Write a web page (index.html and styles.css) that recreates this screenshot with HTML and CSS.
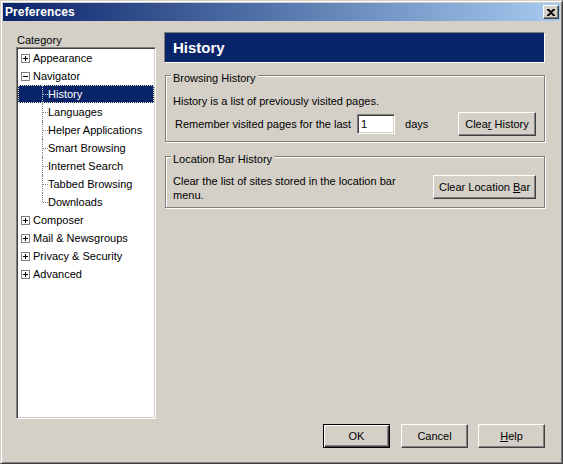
FILE: index.html
```html
<!DOCTYPE html>
<html>
<head>
<meta charset="utf-8">
<title>Preferences</title>
<link rel="stylesheet" href="styles.css">
</head>
<body>
<div class="window">
  <div class="titlebar">
    <span class="title">Preferences</span>
    <div class="close">
      <svg width="8" height="7" viewBox="0 0 8 7"><path d="M0 0h2l2 2 2-2h2v1L5 3.5 8 6v1H6L4 5 2 7H0V6l3-2.5L0 1z" fill="#000"/></svg>
    </div>
  </div>
  <div class="main">
    <div class="left">
      <div class="cat-label">Category</div>
      <div class="tree">
        <div class="row top"><span class="exp plus"></span><span class="lbl">Appearance</span></div>
        <div class="row top"><span class="exp minus"></span><span class="lbl">Navigator</span></div>
        <div class="row child selected"><span class="lbl">History</span></div>
        <div class="row child"><span class="lbl">Languages</span></div>
        <div class="row child"><span class="lbl">Helper Applications</span></div>
        <div class="row child"><span class="lbl">Smart Browsing</span></div>
        <div class="row child"><span class="lbl">Internet Search</span></div>
        <div class="row child"><span class="lbl">Tabbed Browsing</span></div>
        <div class="row child last"><span class="lbl">Downloads</span></div>
        <div class="row top"><span class="exp plus"></span><span class="lbl">Composer</span></div>
        <div class="row top"><span class="exp plus"></span><span class="lbl">Mail &amp; Newsgroups</span></div>
        <div class="row top"><span class="exp plus"></span><span class="lbl">Privacy &amp; Security</span></div>
        <div class="row top"><span class="exp plus"></span><span class="lbl">Advanced</span></div>
      </div>
    </div>
    <div class="right">
      <div class="header">History</div>
      <fieldset class="group g1">
        <legend>Browsing History</legend>
        <div class="desc">History is a list of previously visited pages.</div>
        <div class="hrow">
          <span class="remember">Remember visited pa<u>g</u>es for the last</span>
          <span class="input">1</span>
          <span class="days">days</span>
          <span class="btn clear-hist"><span>Clea<u>r</u> History</span></span>
        </div>
      </fieldset>
      <fieldset class="group g2">
        <legend>Location Bar History</legend>
        <div class="lrow">
          <div class="desc2">Clear the list of sites stored in the location bar menu.</div>
          <span class="btn clear-loc"><span>Clear Location <u>B</u>ar</span></span>
        </div>
      </fieldset>
    </div>
  </div>
  <div class="footer">
    <span class="btn foot default"><span>OK</span></span>
    <span class="btn foot cancel"><span>Cancel</span></span>
    <span class="btn foot"><span><u>H</u>elp</span></span>
  </div>
</div>
</body>
</html>
```
FILE: styles.css
```css
html, body {
  margin: 0;
  padding: 0;
  background: #d4d0c8;
}
body {
  font-family: "Liberation Sans", Arial, sans-serif;
  font-size: 11px;
  color: #000;
}
.window {
  width: 563px;
  height: 464px;
  box-sizing: border-box;
  background: #d4d0c8;
  border: 1px solid;
  border-color: #d4d0c8 #404040 #404040 #d4d0c8;
  box-shadow: inset 1px 1px 0 #fff, inset -1px -1px 0 #808080;
  padding: 2px;
}
.titlebar {
  height: 18px;
  background: linear-gradient(to right, #0a246a, #a6caf0);
  display: flex;
  align-items: center;
  justify-content: space-between;
  padding-left: 2px;
}
.title {
  color: #fff;
  font-weight: bold;
  font-size: 12px;
  letter-spacing: 0.1px;
}
.close {
  width: 16px;
  height: 14px;
  box-sizing: border-box;
  margin-right: 1px;
  background: #d4d0c8;
  border: 1px solid;
  border-color: #fff #404040 #404040 #fff;
  box-shadow: inset -1px -1px 0 #808080;
  display: flex;
  align-items: center;
  justify-content: center;
}
.close svg { display: block; margin-left: -1px; }
.main {
  display: flex;
  padding: 11px 0 0 13px;
  height: 398px;
  box-sizing: border-box;
}
.left {
  width: 140px;
  margin-top: 1px;
}
.cat-label {
  height: 14px;
  line-height: 14px;
  padding-left: 1px;
}
.tree {
  width: 140px;
  height: 372px;
  box-sizing: border-box;
  background: #fff;
  border: 1px solid;
  border-color: #808080 #fff #fff #808080;
  box-shadow: inset 1px 1px 0 #404040, inset -1px -1px 0 #d4d0c8;
  padding: 1px;
}
.row {
  height: 18px;
  line-height: 18px;
  display: flex;
  align-items: center;
  position: relative;
  white-space: nowrap;
}
.row.top { padding-left: 3px; }
.exp {
  width: 9px;
  height: 9px;
  box-sizing: border-box;
  border: 1px solid #808080;
  position: relative;
  margin-right: 3px;
  background: #fff;
}
.exp::before {
  content: "";
  position: absolute;
  left: 1px;
  top: 3px;
  width: 5px;
  height: 1px;
  background: #000;
}
.exp.plus::after {
  content: "";
  position: absolute;
  left: 3px;
  top: 1px;
  width: 1px;
  height: 5px;
  background: #000;
}
.row.child { padding-left: 30px; }
.row.child::before {
  content: "";
  position: absolute;
  left: 24px;
  top: 0;
  height: 18px;
  border-left: 1px dotted #808080;
}
.row.child.last::before { height: 9px; }
.row.child::after {
  content: "";
  position: absolute;
  left: 25px;
  top: 9px;
  width: 5px;
  border-top: 1px dotted #808080;
}
.row.selected {
  background: #0a246a;
  color: #fff;
  outline: 1px dotted #e8e4c0;
  outline-offset: -1px;
}
.row.selected::before, .row.selected::after { border-color: #c8c8c8; }
.right {
  width: 381px;
  margin-left: 8px;
}
.header {
  height: 31px;
  box-sizing: border-box;
  background: #0a246a;
  border: 1px solid;
  border-color: #808080 #fff #fff #808080;
  color: #fff;
  font-weight: bold;
  font-size: 15px;
  line-height: 29px;
  padding-left: 8px;
}
.group {
  margin: 2px 0 0 1px;
  padding: 0 8px 0 7px;
  width: 380px;
  box-sizing: border-box;
  border: 1px solid #808080;
  box-shadow: inset 1px 1px 0 #fff, 1px 1px 0 #fff;
  min-width: 0;
}
.group legend {
  padding: 6px 2px 0 2px;
  margin-left: -2px;
  line-height: 14px;
  background: #d4d0c8;
}
.g1 { height: 77px; }
.g2 { margin-top: 4px; height: 62px; }
.desc {
  line-height: 14px;
  margin-top: 9px;
}
.hrow {
  display: flex;
  align-items: center;
  margin-top: 4px;
}
.remember { padding-left: 2px; }
.input {
  width: 38px;
  height: 20px;
  box-sizing: border-box;
  background: #fff;
  border: 1px solid;
  border-color: #808080 #fff #fff #808080;
  box-shadow: inset 1px 1px 0 #404040, inset -1px -1px 0 #d4d0c8;
  margin-left: 6px;
  padding-left: 3px;
  line-height: 18px;
}
.days { margin-left: 10px; }
.btn {
  display: inline-flex;
  align-items: center;
  justify-content: center;
  height: 24px;
  box-sizing: border-box;
  background: #d4d0c8;
  border: 1px solid;
  border-color: #fff #404040 #404040 #fff;
  box-shadow: inset -1px -1px 0 #808080, inset 1px 1px 0 #d4d0c8;
  white-space: nowrap;
}
.clear-hist { width: 78px; margin-left: auto; }
.lrow {
  display: flex;
  align-items: flex-start;
  margin-top: 8px;
}
.desc2 {
  width: 250px;
  line-height: 14px;
}
.clear-loc { width: 103px; margin-left: auto; margin-top: 1px; }
.footer {
  display: flex;
  justify-content: flex-end;
  padding-right: 15px;
  margin-top: 5px;
}
.btn.foot { width: 67px; margin-left: 11px; }
.btn.cancel { margin-left: 11px; margin-right: -1px; }
.btn.default {
  border: 1px solid #000;
  box-shadow: inset 1px 1px 0 #fff, inset -1px -1px 0 #404040, inset -2px -2px 0 #808080;
}
u { text-decoration-thickness: 1px; text-underline-offset: 1px; }
```
